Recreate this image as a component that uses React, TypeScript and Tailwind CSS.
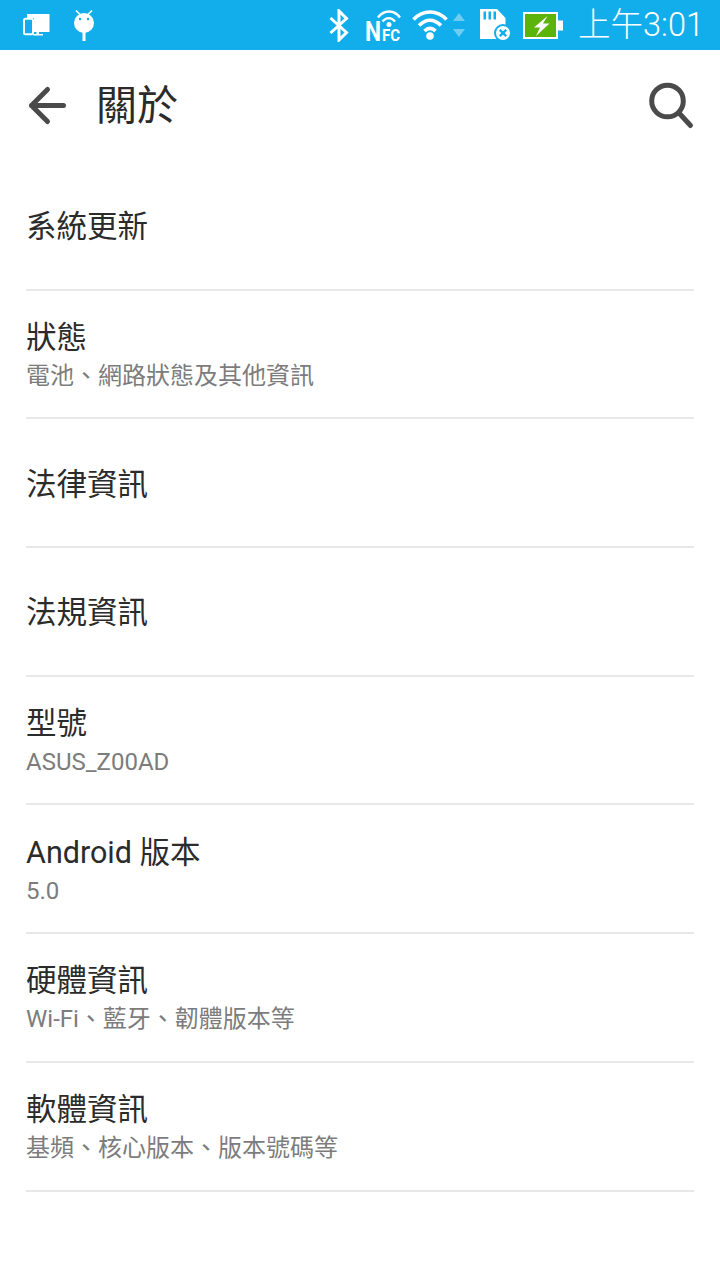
const font = { fontFamily: 'Roboto, "Noto Sans CJK TC", sans-serif' };

type Item = { title: string; sub?: string };

const items: Item[] = [
  { title: '系統更新' },
  { title: '狀態', sub: '電池、網路狀態及其他資訊' },
  { title: '法律資訊' },
  { title: '法規資訊' },
  { title: '型號', sub: 'ASUS_Z00AD' },
  { title: 'Android 版本', sub: '5.0' },
  { title: '硬體資訊', sub: 'Wi-Fi、藍牙、韌體版本等' },
  { title: '軟體資訊', sub: '基頻、核心版本、版本號碼等' },
];

function DevicesIcon() {
  return (
    <svg width="27" height="22" viewBox="0 0 27 22" fill="none">
      <path d="M4 0h22.500v18H16v2h4v1.500H10V20h3.500v-2H11V4H4z" fill="#fff" />
      <rect x="1" y="4.800" width="9" height="15.500" rx="1.500" stroke="#fff" strokeWidth="2" fill="#12aeeb" />
    </svg>
  );
}

function AndroidIcon() {
  return (
    <svg width="20" height="31" viewBox="0 0 20 31" fill="none">
      <path d="M2 0.500l4.500 4.500M18 0.500L13.500 5" stroke="#fff" strokeWidth="1.600" />
      <circle cx="10" cy="13" r="10" fill="#fff" />
      <circle cx="6" cy="9" r="1.200" fill="#12aeeb" />
      <circle cx="14" cy="9" r="1.200" fill="#12aeeb" />
      <rect x="8.500" y="22" width="3" height="9" fill="#fff" />
    </svg>
  );
}

function BluetoothIcon() {
  return (
    <svg width="20" height="33" viewBox="0 0 20 33" fill="none">
      <path d="M1.500 9 17.500 23.500 10 31V2l7.500 7.500L1.500 24" stroke="#fff" strokeWidth="3" />
    </svg>
  );
}

function NfcIcon() {
  return (
    <svg width="35" height="33" viewBox="0 0 35 33" fill="none" className="overflow-visible">
      <path d="M13 8.500C19 0.500 29 0.500 35 8.500M17.500 12.500c3.500-4.500 9-4.500 12.500 0" stroke="#fff" strokeWidth="2.400" />
      <circle cx="24" cy="15.500" r="2.500" fill="#fff" />
      <text x="0" y="32" fill="#fff" fontSize="27" fontWeight="700" fontFamily="Roboto, sans-serif" textLength="16" lengthAdjust="spacingAndGlyphs">N</text>
      <text x="17" y="32" fill="#fff" fontSize="16" fontWeight="700" fontFamily="Roboto, sans-serif" textLength="18" lengthAdjust="spacingAndGlyphs">FC</text>
    </svg>
  );
}

function WifiIcon() {
  return (
    <svg width="36" height="30" viewBox="0 0 36 30" fill="none">
      <path d="M1.500 9.500C11-.5 25-.5 34.500 9.500M7 15.500c7-7 15-7 22 0M12.500 21c3.500-3.500 7.500-3.500 11 0" stroke="#fff" strokeWidth="3.600" />
      <circle cx="18" cy="26" r="3.800" fill="#fff" />
    </svg>
  );
}

function ArrowsIcon() {
  return (
    <svg width="12" height="24" viewBox="0 0 12 24">
      <path d="M6 0l6 8H0z" fill="#6fcdf2" />
      <path d="M6 24l6-8H0z" fill="#6fcdf2" />
    </svg>
  );
}

function SdIcon() {
  return (
    <svg width="32" height="32" viewBox="0 0 32 32" fill="none">
      <path d="M0 0h17l8.500 9v21H0z" fill="#fff" />
      <path d="M3.500 2.500h2.500v8H3.500zM8.500 2.500h2.500v8H8.500zM13.500 2.500h2.500v8h-2.500z" fill="#12aeeb" />
      <circle cx="23" cy="24" r="9" fill="#12aeeb" />
      <circle cx="23" cy="24" r="7" fill="#fff" />
      <path d="M19.800 20.800l6.400 6.400M26.200 20.800l-6.400 6.400" stroke="#12aeeb" strokeWidth="2.400" />
    </svg>
  );
}

function BatteryIcon() {
  return (
    <svg width="40" height="27" viewBox="0 0 40 27" fill="none">
      <rect x="1" y="1" width="33" height="25" fill="#5cb30a" stroke="#fff" strokeWidth="2" />
      <rect x="35" y="8.500" width="5" height="10" fill="#fff" />
      <path d="M24.500 4L11 15.500h6L13 24l13.500-12.500H20z" fill="#fff" />
    </svg>
  );
}

function BackArrow() {
  return (
    <svg width="44" height="44" viewBox="0 0 44 44" fill="none">
      <path d="M21.500 5.500L5.500 21.500L21.500 37.500M5.500 21.500H37.500" stroke="#4a4a4a" strokeWidth="5" strokeLinecap="round" strokeLinejoin="round" />
    </svg>
  );
}

function SearchIcon() {
  return (
    <svg width="54" height="54" viewBox="0 0 54 54" fill="none">
      <circle cx="25.500" cy="22" r="15.800" stroke="#4a4a4a" strokeWidth="5" />
      <path d="M37 34L48.500 46.500" stroke="#4a4a4a" strokeWidth="5" strokeLinecap="round" />
    </svg>
  );
}

function Row({ title, sub }: Item) {
  return (
    <div className="h-[128.7px] pt-[4px] flex flex-col justify-center border-b-2 border-[#e8e8e8]">
      <div className="text-[30.500px] leading-[40px] text-[#2b2b2b]">{title}</div>
      {sub && <div className="text-[24px] leading-[36px] text-[#7c7c7c]">{sub}</div>}
    </div>
  );
}

export default function App() {
  return (
    <div className="w-[720px] h-[1280px] bg-white overflow-hidden" style={font}>
      <div className="h-[50px] bg-[#12aeeb] flex items-center pl-[23px] pr-[16px]">
        <div className="flex items-center gap-[24px]">
          <DevicesIcon />
          <AndroidIcon />
        </div>
        <div className="ml-auto flex items-center">
          <BluetoothIcon />
          <div className="ml-[16px]">
            <NfcIcon />
          </div>
          <div className="ml-[12px]">
            <WifiIcon />
          </div>
          <div className="ml-[5px]">
            <ArrowsIcon />
          </div>
          <div className="ml-[15px]">
            <SdIcon />
          </div>
          <div className="ml-[11px]">
            <BatteryIcon />
          </div>
          <span className="ml-[15px] text-[32.500px] leading-[50px] text-white font-light">上午3:01</span>
        </div>
      </div>
      <div className="h-[112px] flex items-center pl-[26px] pr-[24px]">
        <BackArrow />
        <h1 className="ml-[26px] text-[41px] leading-[56px] text-[#2b2b2b]">關於</h1>
        <div className="ml-auto">
          <SearchIcon />
        </div>
      </div>
      <div className="px-[26px]">
        {items.map((item) => (
          <Row key={item.title} {...item} />
        ))}
      </div>
    </div>
  );
}
